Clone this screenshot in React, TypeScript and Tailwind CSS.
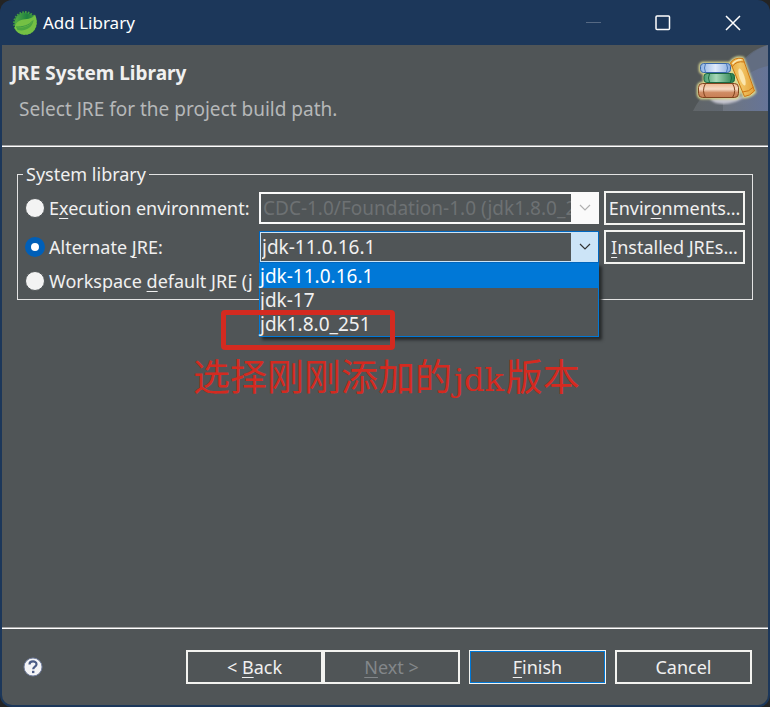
import React from "react";

function SpringLeafIcon() {
  return (
    <svg width="24" height="24" viewBox="0 0 24 24" aria-hidden="true">
      <defs>
        <linearGradient id="leafBack" x1="0" x2="1">
          <stop offset="0" stopColor="#55ad45" />
          <stop offset=".6" stopColor="#1f8040" />
          <stop offset="1" stopColor="#3f9c3e" />
        </linearGradient>
      </defs>
      <circle cx="12" cy="12" r="10.500" fill="url(#leafBack)" />
      <circle cx="12" cy="12" r="10.800" fill="none" stroke="#3f9c3e" strokeWidth="2.200" strokeDasharray="1.700 1.200" pathLength="69.600" />
      <path d="M1.500 17 C3 9 9 8.500 14 8 C19 7.500 21 5 22 3.500 C25.500 11 23.500 19 17.500 22.500 C11 25.500 4 23 1.500 17Z" fill="#74c044" />
      <path d="M3.500 16.500 C10 17 17 15.500 20.500 9.500 C19 18 11 20.500 4.500 19Z" fill="#4aa540" />
      <path d="M3 16 C9 16 16 15 20 9.500" fill="none" stroke="#2f9142" strokeWidth=".8" />
    </svg>
  );
}

function BooksBanner() {
  return (
    <svg width="75" height="66" viewBox="0 0 75 66" aria-hidden="true" className="shrink-0">
      <defs>
        <linearGradient id="sweep" x1="0" x2="1">
          <stop offset="0" stopColor="#6c7175" />
          <stop offset="1" stopColor="#667390" />
        </linearGradient>
        <linearGradient id="near" x1="0" x2="1">
          <stop offset="0" stopColor="#70767f" />
          <stop offset="1" stopColor="#66759a" />
        </linearGradient>
        <linearGradient id="blue" x1="0" x2="1">
          <stop offset="0" stopColor="#8fb3e3" />
          <stop offset=".5" stopColor="#e0eafa" />
          <stop offset="1" stopColor="#86abdf" />
        </linearGradient>
        <linearGradient id="green" x1="0" x2="1">
          <stop offset="0" stopColor="#4a9e72" />
          <stop offset=".4" stopColor="#a6d8b7" />
          <stop offset="1" stopColor="#237c4c" />
        </linearGradient>
        <linearGradient id="brown" x1="0" x2="0" y1="0" y2="1">
          <stop offset="0" stopColor="#edb790" />
          <stop offset=".4" stopColor="#f7dcc6" />
          <stop offset=".65" stopColor="#cf8b63" />
          <stop offset="1" stopColor="#c87f55" />
        </linearGradient>
        <linearGradient id="gold" x1="0" x2="1">
          <stop offset="0" stopColor="#e9aa3e" />
          <stop offset=".4" stopColor="#f3c768" />
          <stop offset="1" stopColor="#e3a238" />
        </linearGradient>
        <filter id="halo" x="-20%" y="-20%" width="140%" height="140%">
          <feGaussianBlur stdDeviation=".8" />
        </filter>
        <filter id="soft">
          <feGaussianBlur stdDeviation="1" />
        </filter>
      </defs>
      <path d="M0 66 C8 50 22 36 44 23 C54 8 64 3 75 0 V66Z" fill="url(#sweep)" opacity=".6" />
      <path d="M50 17 C57 9 65 3 75 0 V66 H30 V40Z" fill="#66728a" opacity=".55" />
      <path d="M30 66 V50 C45 36 58 24 75 21 V66Z" fill="url(#near)" opacity=".9" />
      <path d="M17 54 C22 61 40 61 53 51Z" fill="#c4c4cf" filter="url(#soft)" />
      <g fill="#dedb92" stroke="#dedb92" strokeWidth="2.500" filter="url(#halo)">
        <rect x="7" y="18" width="31" height="10" rx="3" />
        <rect x="11" y="28" width="31" height="10" rx="3" />
        <rect x="5" y="38" width="41" height="15" rx="4" />
        <path d="M37 18 Q42 11 50 13 L62 47 Q58 52 51 52Z" />
      </g>
      <g strokeWidth="1">
        <rect x="7.500" y="18.500" width="30" height="9" rx="3" fill="url(#blue)" stroke="#3865a5" />
        <path d="M12.500 18.500 Q10.500 23 12.500 27.500 M33.500 18.500 Q35.500 23 33.500 27.500" fill="none" stroke="#4a78b8" />
        <rect x="11" y="28.500" width="30.500" height="9" rx="3" fill="url(#green)" stroke="#1b6841" />
        <path d="M16.500 28.500 Q14.500 33 16.500 37.500 M37.500 28.500 Q39.500 33 37.500 37.500" fill="none" stroke="#1b6841" />
        <rect x="5.500" y="38.500" width="40" height="14" rx="4" fill="url(#brown)" stroke="#81431e" />
        <path d="M12.500 38.500 Q8.500 45.500 12.500 52.500 M39.500 38.500 Q44 45.500 39.500 52.500" fill="none" stroke="#81431e" />
        <path d="M37.500 18 Q41 12 50 13.500 L61.500 46 Q57 51 51.500 51.500Z" fill="url(#gold)" stroke="#cc7413" />
        <path d="M39 22 Q43 15.500 51.500 17 M49.500 47 Q56 47 60.500 42" fill="none" stroke="#cc7413" />
        <path d="M39.500 19 Q43 14.500 48.500 14.800" fill="none" stroke="#fbe9b8" strokeWidth="1.500" />
        <ellipse cx="49" cy="32" rx="2.500" ry="9" fill="#fbe6ae" transform="rotate(-18 49 32)" />
      </g>
    </svg>
  );
}

function HelpIcon() {
  return (
    <svg width="20" height="20" viewBox="0 0 20 20" aria-hidden="true">
      <circle cx="10" cy="10" r="9" fill="#f4f4f6" stroke="#7582a3" strokeWidth="1" />
      <path d="M6.500 7.500 C6.500 3.500 13.500 3.500 13.500 7.200 C13.500 9.700 10.200 9.500 10.200 12.300" fill="none" stroke="#4b5c86" strokeWidth="2.200" />
      <rect x="9" y="13.800" width="2.400" height="2.300" fill="#4b5c86" />
    </svg>
  );
}

function Chevron() {
  return (
    <svg width="12" height="8" viewBox="0 0 12 8" fill="none" stroke="currentColor" strokeWidth="1.200" aria-hidden="true">
      <path d="M1 1 L6 6 L11 1" />
    </svg>
  );
}

function Key({ children }: { children: string }) {
  return <span className="underline decoration-1 underline-offset-3">{children}</span>;
}

const radioClass =
  "size-5 shrink-0 appearance-none rounded-full border border-[#505557] bg-[#f3f3f3] checked:border-[6px] checked:border-[#005fb8] checked:bg-white";
const sideButton =
  "h-[34px] w-[141px] whitespace-nowrap border-2 border-[#f3f3f0] text-center leading-6";
const footButton = "h-[34px] w-[137px] border-2 border-[#f3f3f0] leading-6";

export default function App() {
  return (
    <div className="min-h-screen bg-[#242424] font-['Noto_Sans','Noto_Sans_CJK_SC',sans-serif] text-lg leading-6 text-[#f0f0f0]">
      <div className="flex min-h-screen flex-col rounded-xl bg-[#1c375a] px-0.5 pb-0.5">
        <header className="flex h-[45px] items-center pl-[11px] text-white">
          <SpringLeafIcon />
          <h1 className="ml-1.5 flex-1 text-[17px]">Add Library</h1>
          <button type="button" disabled aria-label="Minimize" className="flex h-full w-[70px] items-center justify-center text-[#566983]">
            <svg width="16" height="16" stroke="currentColor" aria-hidden="true"><path d="M1 7.500H16" /></svg>
          </button>
          <button type="button" aria-label="Maximize" className="flex h-full w-[70px] items-center justify-center">
            <svg width="16" height="16" fill="none" stroke="currentColor" strokeWidth="1.500" aria-hidden="true"><rect x="1" y="1" width="13.500" height="13.500" rx="1" /></svg>
          </button>
          <button type="button" aria-label="Close" className="flex h-full w-[70px] items-center justify-center">
            <svg width="16" height="16" stroke="currentColor" strokeWidth="1.500" aria-hidden="true"><path d="M1 1L15 15M15 1L1 15" /></svg>
          </button>
        </header>

        <div className="flex flex-1 flex-col overflow-hidden rounded-b-[10px] bg-[#505557]">
          <section className="flex h-[102px] items-start justify-between border-b border-white pl-[9px] shadow-[inset_0_-1px_#a8a8a8]">
            <div className="pt-4">
              <h2 className="text-[19px] font-bold">JRE System Library</h2>
              <p className="mt-3 pl-2 text-[19px] text-[#b6b8b9]">Select JRE for the project build path.</p>
            </div>
            <BooksBanner />
          </section>

          <main className="flex-1 px-[15px] pt-[15px]">
            <fieldset className="relative border border-[#e3e3e3] px-[7px] pb-px">
              <legend className="ml-[-2px] px-[3px]">System library</legend>
              <div className="flex flex-col gap-[5px] pt-[5px]">
                <div className="flex items-center gap-[5px]">
                  <label className="flex w-[229px] items-center gap-1 whitespace-nowrap">
                    <input type="radio" name="jre" className={radioClass} />
                    <span>E<Key>x</Key>ecution environment:</span>
                  </label>
                  <div className="relative h-8 min-w-0 flex-1">
                    <select disabled aria-label="Execution environment" className="block h-8 w-full appearance-none overflow-hidden border-2 border-[#fafafa] pr-6 pl-0.5 text-[19px] text-[#6d7173] opacity-100">
                      <option>CDC-1.0/Foundation-1.0 (jdk1.8.0_251)</option>
                    </select>
                    <span className="pointer-events-none absolute inset-y-0 right-0 flex w-7 items-center justify-center bg-[#fafafa] text-[#b0b0b0]"><Chevron /></span>
                  </div>
                  <button type="button" className={sideButton}>Envir<Key>o</Key>nments...</button>
                </div>
                <div className="flex items-center gap-[5px]">
                  <label className="flex w-[229px] items-center gap-1 whitespace-nowrap">
                    <input type="radio" name="jre" defaultChecked className={radioClass} />
                    <span>Alternate <Key>J</Key>RE:</span>
                  </label>
                  <div className="relative z-10 h-8 min-w-0 flex-1 text-[19px]">
                    <select aria-label="Alternate JRE" className="block h-8 w-full appearance-none border border-[#0067c0] pr-7 pl-0.5 outline-1 -outline-offset-2 outline-[#cce4f7]">
                      <option>jdk-11.0.16.1</option>
                      <option>jdk-17</option>
                      <option>jdk1.8.0_251</option>
                    </select>
                    <span className="pointer-events-none absolute inset-y-px right-px flex w-[27px] items-center justify-center bg-[#cce4f7] text-[#333]"><Chevron /></span>
                    <ul role="listbox" aria-label="Alternate JRE choices" className="absolute inset-x-0 top-full border border-[#0078d7] bg-[#505557] shadow-[3px_3px_3px_#26292a]">
                      <li role="option" aria-selected="true" className="bg-[#0078d7] text-white">jdk-11.0.16.1</li>
                      <li role="option" aria-selected="false">jdk-17</li>
                      <li role="option" aria-selected="false">jdk1.8.0_251</li>
                    </ul>
                    <div className="absolute top-[79px] left-[-38px] h-10 w-[174px] rounded-sm border-[5px] border-[#d42a20]" />
                    <p className="absolute top-[122px] left-[-66px] whitespace-nowrap text-[37px] leading-12 text-[#d42a20]">
                      选择刚刚添加的<span className="px-0.5 font-['DejaVu_Serif',serif] text-[32px]">jdk</span>版本
                    </p>
                  </div>
                  <button type="button" className={sideButton}><Key>I</Key>nstalled JREs...</button>
                </div>
              </div>
              <label className="flex h-[34px] items-center gap-1 whitespace-nowrap">
                <input type="radio" name="jre" className={radioClass} />
                <span>Workspace <Key>d</Key>efault JRE (j</span>
              </label>
            </fieldset>
          </main>

          <footer className="flex items-center border-t border-[#a8a8a8] pt-[22px] pr-4 pb-[21px] pl-[21px] shadow-[inset_0_1px_#fff]">
            <button type="button" aria-label="Help" className="mr-auto"><HelpIcon /></button>
            <button type="button" className={footButton}>&lt; <Key>B</Key>ack</button>
            <button type="button" disabled className={`${footButton} text-[#83878a]`}><Key>N</Key>ext &gt;</button>
            <button type="button" className={`${footButton} ml-[9px] outline-1 -outline-offset-2 outline-[#0078d7]`}><Key>F</Key>inish</button>
            <button type="button" className={`${footButton} ml-[9px]`}>Cancel</button>
          </footer>
        </div>
      </div>
    </div>
  );
}
